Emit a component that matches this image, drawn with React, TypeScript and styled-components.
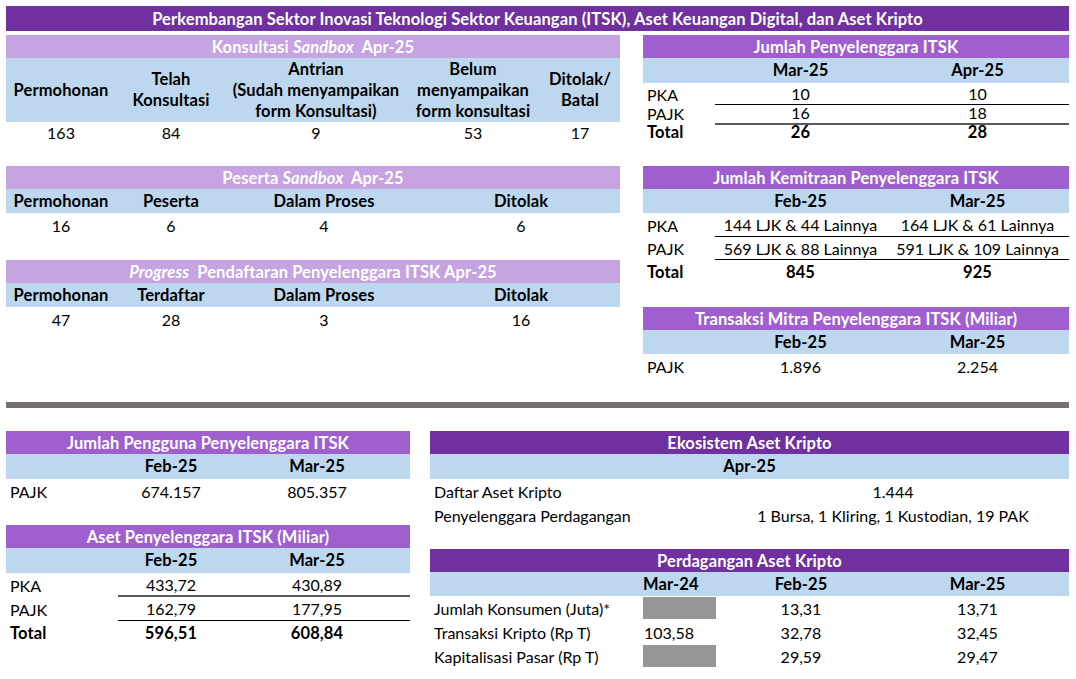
import React from 'react';
import styled, { createGlobalStyle, css } from 'styled-components';

type Tone = 'dark' | 'mid' | 'light';
type Rule = 'thin' | 'thick' | undefined;

const toneColor: Record<Tone, string> = {
  dark: '#7030A0',
  mid: '#9F5FCF',
  light: '#C6A3E1',
};

const boldText = css`
  font-weight: 700;
  font-size: 16.5px;
  letter-spacing: 0.1px;
`;

const Global = createGlobalStyle`
  html, body { margin: 0; padding: 0; background: #fff; }
  body { font-family: Lato, "Open Sans", "Liberation Sans", sans-serif; color: #000; }
`;

const Page = styled.div`
  width: 1076px;
  height: 679px;
  box-sizing: border-box;
  padding: 6px 7px 0 6px;
  font-size: 16px;
  overflow: hidden;
`;

const Banner = styled.div`
  height: 25px;
  background: ${toneColor.dark};
  color: #fff;
  ${boldText};
  display: flex;
  align-items: center;
  justify-content: center;
  white-space: nowrap;
`;

const Split = styled.div<{ $cols: string; $gap: number; $top: number }>`
  display: grid;
  grid-template-columns: ${(p) => p.$cols};
  column-gap: ${(p) => p.$gap}px;
  margin-top: ${(p) => p.$top}px;
  align-items: start;
`;

const Stack = styled.div<{ $gap: number }>`
  display: flex;
  flex-direction: column;
  gap: ${(p) => p.$gap}px;
`;

const Title = styled.div<{ $tone: Tone }>`
  height: 23px;
  background: ${(p) => toneColor[p.$tone]};
  color: #fff;
  ${boldText};
  display: flex;
  align-items: center;
  justify-content: center;
  white-space: pre;
`;

const Row = styled.div<{ $cols: string; $h: number; $head?: boolean }>`
  display: grid;
  grid-template-columns: ${(p) => p.$cols};
  height: ${(p) => p.$h}px;
  background: ${(p) => (p.$head ? '#BDD7EE' : 'transparent')};
  ${(p) => (p.$head ? boldText : '')};
`;

const Cell = styled.div<{
  $align?: 'left' | 'center';
  $bold?: boolean;
  $rule?: Rule;
  $fill?: boolean;
  $span?: number;
  $shift?: number;
}>`
  box-sizing: border-box;
  display: flex;
  align-items: center;
  justify-content: ${(p) => (p.$align === 'left' ? 'flex-start' : 'center')};
  text-align: center;
  padding-left: ${(p) => (p.$align === 'left' ? 4 : 0) + (p.$shift ?? 0)}px;
  ${(p) => (p.$bold ? boldText : '')};
  white-space: nowrap;
  line-height: 21px;
  grid-column: ${(p) => (p.$span ? `span ${p.$span}` : 'auto')};
  border-bottom: ${(p) =>
    p.$rule === 'thin' ? '1px solid #000' : p.$rule === 'thick' ? '2px solid #5a5a5a' : 'none'};
  background: ${(p) => (p.$fill ? '#969696' : 'transparent')};
  ${(p) => (p.$fill ? 'margin: 1px 0;' : '')}
`;

const Divider = styled.div`
  height: 6px;
  background: #767171;
  margin-top: 24px;
`;

const TOP_L = '110px 110px 180px 134px 80px';
const MID_L = '110px 110px 196px 1fr';
const TOP_R = '72px 171px 1fr';
const BOT_L = '112px 106px 1fr';
const EKO = '287px 1fr';
const PERD = '213px 73px 170px 1fr';

type Pair = { label: string; a: string; b: string; rule?: Rule; bold?: boolean };

const CompareTable: React.FC<{
  title: React.ReactNode;
  tone: Tone;
  cols: string;
  heads: [string, string];
  headH: number;
  rows: Pair[];
  rowHs: number[];
}> = ({ title, tone, cols, heads, headH, rows, rowHs }) => (
  <div>
    <Title $tone={tone}>{title}</Title>
    <Row $cols={cols} $h={headH} $head>
      <Cell />
      <Cell>{heads[0]}</Cell>
      <Cell>{heads[1]}</Cell>
    </Row>
    {rows.map((r, i) => (
      <Row key={r.label} $cols={cols} $h={rowHs[i]}>
        <Cell $align="left" $bold={r.bold}>{r.label}</Cell>
        <Cell $bold={r.bold} $rule={r.rule}>{r.a}</Cell>
        <Cell $bold={r.bold} $rule={r.rule}>{r.b}</Cell>
      </Row>
    ))}
  </div>
);

const FourTable: React.FC<{ title: React.ReactNode; heads: string[]; values: string[] }> = ({
  title,
  heads,
  values,
}) => (
  <div>
    <Title $tone="light">{title}</Title>
    <Row $cols={MID_L} $h={24} $head>
      {heads.map((h) => (
        <Cell key={h}>{h}</Cell>
      ))}
    </Row>
    <Row $cols={MID_L} $h={24}>
      {values.map((v, i) => (
        <Cell key={i}>{v}</Cell>
      ))}
    </Row>
  </div>
);

export default function App() {
  return (
    <Page>
      <Global />
      <Banner>
        Perkembangan Sektor Inovasi Teknologi Sektor Keuangan (ITSK), Aset Keuangan Digital, dan Aset Kripto
      </Banner>

      <Split $cols="614px 426px" $gap={23} $top={4}>
        <Stack $gap={23}>
          <div>
            <Title $tone="light">
              Konsultasi <i>Sandbox</i>  Apr-25
            </Title>
            <Row $cols={TOP_L} $h={64} $head>
              <Cell>Permohonan</Cell>
              <Cell>
                Telah
                <br />
                Konsultasi
              </Cell>
              <Cell>
                Antrian
                <br />
                (Sudah menyampaikan
                <br />
                form Konsultasi)
              </Cell>
              <Cell>
                Belum
                <br />
                menyampaikan
                <br />
                form konsultasi
              </Cell>
              <Cell>
                Ditolak/
                <br />
                Batal
              </Cell>
            </Row>
            <Row $cols={TOP_L} $h={21}>
              <Cell>163</Cell>
              <Cell>84</Cell>
              <Cell>9</Cell>
              <Cell>53</Cell>
              <Cell>17</Cell>
            </Row>
          </div>

          <FourTable
            title={
              <>
                Peserta <i>Sandbox</i>  Apr-25
              </>
            }
            heads={['Permohonan', 'Peserta', 'Dalam Proses', 'Ditolak']}
            values={['16', '6', '4', '6']}
          />

          <FourTable
            title={
              <>
                <i>Progress</i>  Pendaftaran Penyelenggara ITSK Apr-25
              </>
            }
            heads={['Permohonan', 'Terdaftar', 'Dalam Proses', 'Ditolak']}
            values={['47', '28', '3', '16']}
          />
        </Stack>

        <Stack $gap={23}>
          <CompareTable
            title="Jumlah Penyelenggara ITSK"
            tone="mid"
            cols={TOP_R}
            heads={['Mar-25', 'Apr-25']}
            headH={25}
            rowHs={[19, 20, 21]}
            rows={[
              { label: 'PKA', a: '10', b: '10', rule: 'thin' },
              { label: 'PAJK', a: '16', b: '18', rule: 'thick' },
              { label: 'Total', a: '26', b: '28', bold: true },
            ]}
          />
          <CompareTable
            title="Jumlah Kemitraan Penyelenggara ITSK"
            tone="mid"
            cols={TOP_R}
            heads={['Feb-25', 'Mar-25']}
            headH={24}
            rowHs={[24, 23, 24]}
            rows={[
              { label: 'PKA', a: '144 LJK & 44 Lainnya', b: '164 LJK & 61 Lainnya', rule: 'thin' },
              { label: 'PAJK', a: '569 LJK & 88 Lainnya', b: '591 LJK & 109 Lainnya', rule: 'thin' },
              { label: 'Total', a: '845', b: '925', bold: true },
            ]}
          />
          <CompareTable
            title="Transaksi Mitra Penyelenggara ITSK (Miliar)"
            tone="mid"
            cols={TOP_R}
            heads={['Feb-25', 'Mar-25']}
            headH={24}
            rowHs={[24]}
            rows={[{ label: 'PAJK', a: '1.896', b: '2.254' }]}
          />
        </Stack>
      </Split>

      <Divider />

      <Split $cols="404px 639px" $gap={20} $top={23}>
        <Stack $gap={22}>
          <CompareTable
            title="Jumlah Pengguna Penyelenggara ITSK"
            tone="mid"
            cols={BOT_L}
            heads={['Feb-25', 'Mar-25']}
            headH={25}
            rowHs={[24]}
            rows={[{ label: 'PAJK', a: '674.157', b: '805.357' }]}
          />
          <CompareTable
            title="Aset Penyelenggara ITSK (Miliar)"
            tone="mid"
            cols={BOT_L}
            heads={['Feb-25', 'Mar-25']}
            headH={25}
            rowHs={[24, 24, 24]}
            rows={[
              { label: 'PKA', a: '433,72', b: '430,89', rule: 'thick' },
              { label: 'PAJK', a: '162,79', b: '177,95', rule: 'thin' },
              { label: 'Total', a: '596,51', b: '608,84', bold: true },
            ]}
          />
        </Stack>

        <Stack $gap={22}>
          <div>
            <Title $tone="dark">Ekosistem Aset Kripto</Title>
            <Row $cols={EKO} $h={25} $head>
              <Cell $span={2}>Apr-25</Cell>
            </Row>
            <Row $cols={EKO} $h={24}>
              <Cell $align="left">Daftar Aset Kripto</Cell>
              <Cell>1.444</Cell>
            </Row>
            <Row $cols={EKO} $h={24}>
              <Cell $align="left">Penyelenggara Perdagangan</Cell>
              <Cell>1 Bursa, 1 Kliring, 1 Kustodian, 19 PAK</Cell>
            </Row>
          </div>
          <div>
            <Title $tone="dark">Perdagangan Aset Kripto</Title>
            <Row $cols={PERD} $h={24} $head>
              <Cell />
              <Cell $align="left" $shift={-4}>Mar-24</Cell>
              <Cell>Feb-25</Cell>
              <Cell>Mar-25</Cell>
            </Row>
            <Row $cols={PERD} $h={24}>
              <Cell $align="left">Jumlah Konsumen (Juta)*</Cell>
              <Cell $fill />
              <Cell>13,31</Cell>
              <Cell>13,71</Cell>
            </Row>
            <Row $cols={PERD} $h={24}>
              <Cell $align="left">Transaksi Kripto (Rp T)</Cell>
              <Cell $align="left" $shift={-3}>103,58</Cell>
              <Cell>32,78</Cell>
              <Cell>32,45</Cell>
            </Row>
            <Row $cols={PERD} $h={24}>
              <Cell $align="left">Kapitalisasi Pasar (Rp T)</Cell>
              <Cell $fill />
              <Cell>29,59</Cell>
              <Cell>29,47</Cell>
            </Row>
          </div>
        </Stack>
      </Split>
    </Page>
  );
}
